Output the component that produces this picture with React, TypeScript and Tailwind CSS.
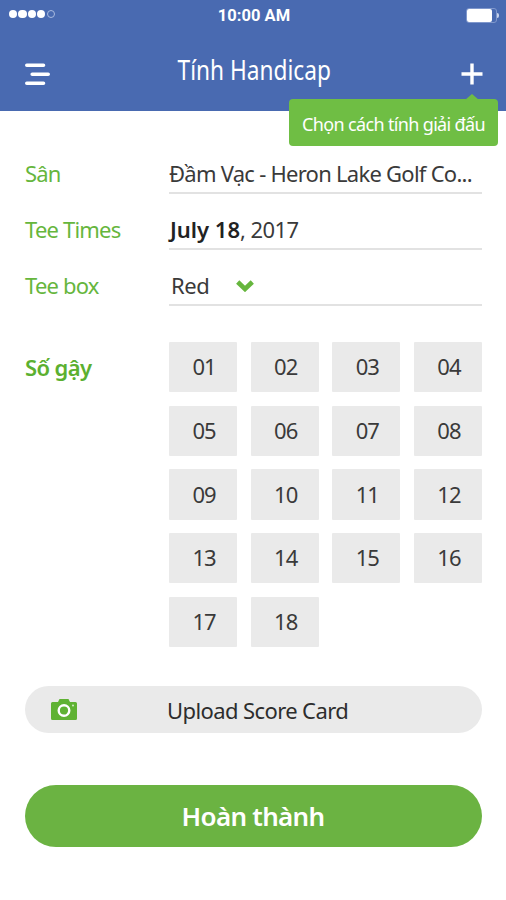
const holes = Array.from({ length: 18 }, (_, i) => String(i + 1).padStart(2, "0"));

function StatusBar() {
  return (
    <div className="grid h-[30px] grid-cols-3 items-center pl-[9px] pr-[7px] font-['Roboto',sans-serif]">
      <div className="-mt-0.5 flex items-center gap-[1.2px]">
        {[0, 1, 2, 3].map((dot) => (
          <span key={dot} className="size-[8.2px] rounded-full bg-white" />
        ))}
        <span className="size-[8.2px] rounded-full border border-[#a9bbe0]" />
      </div>
      <p className="whitespace-nowrap pt-0.5 text-center text-[16.5px] font-bold leading-none tracking-[0.05px]">
        10:00 AM
      </p>
      <div className="flex items-center justify-end">
        <div className="h-[15px] w-[31px] rounded-[3px] border border-[#7f97cc]">
          <div className="h-full w-[25px] rounded-[2px] bg-white" />
        </div>
        <span className="h-[5px] w-[2px] rounded-r-full bg-[#c6d2ec]" />
      </div>
    </div>
  );
}

function Header() {
  return (
    <header className="h-[111px] bg-[#496ab1] text-white">
      <StatusBar />
      <div className="grid h-[81px] grid-cols-[1fr_auto_1fr] items-center pl-[25px] pr-[23px] pt-[7px]">
        <svg width="25" height="23" viewBox="0 0 25 23" stroke="currentColor" strokeWidth="3.6" strokeLinecap="round">
          <path d="M1.8 2.2H18.5M7.2 11.3H23.2M1.8 20.3H18.5" />
        </svg>
        <h1 className="-mx-4 -mt-2 origin-center scale-x-[0.84] whitespace-nowrap text-[27px]">Tính Handicap</h1>
        <div className="relative justify-self-end">
          <svg width="22" height="22" viewBox="0 0 22 22" stroke="currentColor" strokeWidth="3.4">
            <path d="M11 .5V21.5M.5 11H21.5" />
          </svg>
          <div className="absolute -right-[15px] top-[36px] flex h-[47px] w-[209px] items-center justify-center rounded-[4px] bg-[#6fbe44]">
            <svg className="absolute -top-[5px] right-[19px]" width="14" height="6" viewBox="0 0 14 6" fill="#6fbe44">
              <path d="M0 6L7 0L14 6Z" />
            </svg>
            <span className="whitespace-nowrap pt-[3px] text-[18px] tracking-[-0.65px]">Chọn cách tính giải đấu</span>
          </div>
        </div>
      </div>
    </header>
  );
}

function Field({ label, children }: { label: string; children: React.ReactNode }) {
  return (
    <div className="flex h-14">
      <span className="w-36 pt-[18px] leading-[34px] tracking-[-0.8px] text-[#66b63d]">{label}</span>
      <div className="flex flex-1 items-center whitespace-nowrap border-b-2 border-[#e2e2e2] pt-[17px]">
        {children}
      </div>
    </div>
  );
}

export default function App() {
  return (
    <div className="h-[900px] w-[506px] bg-white font-['Noto_Sans',sans-serif] text-[22px] text-[#3a3a3a]">
      <Header />
      <main className="pl-[25px] pr-6 pt-[27px]">
        <Field label="Sân">
          <span className="tracking-[-0.74px]">Đầm Vạc - Heron Lake Golf Co...</span>
        </Field>
        <Field label="Tee Times">
          <span className="pl-px tracking-[-0.6px]">
            <b className="font-semibold tracking-[0px] text-[#222]">July 18</b>, 2017
          </span>
        </Field>
        <Field label="Tee box">
          <span className="pl-0.5 tracking-[-0.4px]">Red</span>
          <svg className="ml-[27px]" width="18" height="12" viewBox="0 0 18 12" fill="none" stroke="#66b63d" strokeWidth="4.6">
            <path d="M1.7 2L9 9L16.3 2" />
          </svg>
        </Field>

        <section className="mt-9 flex">
          <h2 className="w-36 pt-[9px] font-semibold tracking-[-0.6px] text-[#5bb030]">Số gậy</h2>
          <div className="grid flex-1 grid-cols-4 gap-x-[13.5px] gap-y-[13.3px]">
            {holes.map((hole) => (
              <button key={hole} className="h-[50.4px] rounded-[1px] bg-[#eaeaea] pb-px pl-0.5 tracking-[-0.9px]">
                {hole}
              </button>
            ))}
          </div>
        </section>

        <button className="mt-[39px] flex h-[47px] w-full items-center rounded-full bg-[#eaeaea] pl-[26px]">
          <svg width="26" height="21" viewBox="0 0 26 21" fill="#5fb233">
            <path d="M1.5 3H7L8.5 0H17.5L19 3H24.5Q26 3 26 4.5V19.5Q26 21 24.5 21H1.5Q0 21 0 19.5V4.5Q0 3 1.5 3Z" />
            <circle cx="13" cy="11.5" r="5.3" stroke="#fff" strokeWidth="2.4" />
            <circle cx="22" cy="6.5" r="1" fill="#d5edc8" />
          </svg>
          <span className="ml-[90px] whitespace-nowrap pt-0.5 tracking-[-0.6px] text-[#2d2d2d]">Upload Score Card</span>
        </button>

        <button className="mt-[52px] h-[62px] w-full rounded-full bg-[#6bb342] pr-px text-[26px] font-semibold tracking-[-0.7px] text-white">
          Hoàn thành
        </button>
      </main>
    </div>
  );
}
